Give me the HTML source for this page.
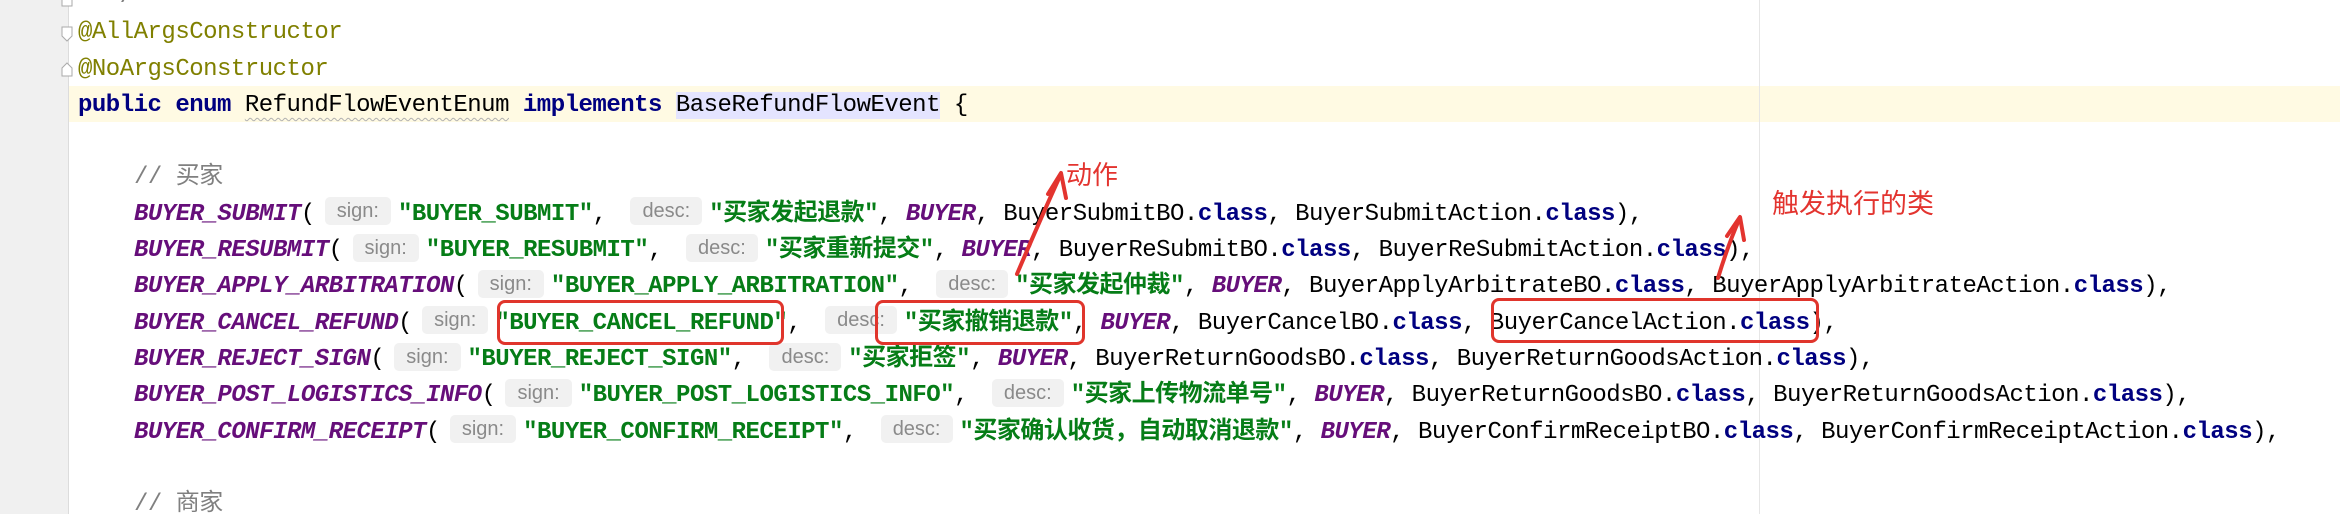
<!DOCTYPE html>
<html><head><meta charset="utf-8"><style>
html,body{margin:0;padding:0}
body{width:2340px;height:514px;overflow:hidden;background:#fff;position:relative;font-family:"Liberation Mono","Noto Sans CJK SC",monospace;font-size:24px;letter-spacing:-0.5px;color:#000}
#gut{position:absolute;left:0;top:0;width:68px;height:514px;background:#f0f0f0;border-right:1px solid #dcdcdc}
#margin{position:absolute;left:1759px;top:0;width:1px;height:514px;background:#e6e6e6}
#hl{position:absolute;left:69px;top:86px;width:2271px;height:36px;background:#fffae3}
#code{position:absolute;left:78px;top:-21px}
.l{height:36.3px;line-height:36.3px;white-space:pre}
.i{padding-left:56px}
.an{color:#808000}
.kw{color:#000080;font-weight:bold}
.en{color:#660e7a;font-weight:bold;font-style:italic}
.s{color:#067d17;font-weight:bold}
.c{color:#808080}
.h{display:inline-block;font-family:"Liberation Sans",sans-serif;font-size:20px;letter-spacing:0;color:#8a8a8a;background:#f1f1f1;border-radius:5px;height:28px;line-height:28px;padding:0 12px;vertical-align:middle;margin:0 7px 0 10px;position:relative;top:-2px}
.base{background:#e4e4ff}
.wav{text-decoration:underline wavy #b0b0b0;text-decoration-thickness:1px;text-underline-offset:6px}
.red{position:absolute;color:#e3342f;font-family:"Noto Sans CJK SC",sans-serif;letter-spacing:0}
.box{position:absolute;border:3.5px solid #e0352c;border-radius:8px;box-sizing:border-box}
</style></head><body>
<div id="gut"></div>
<div id="hl"></div>
<div id="margin"></div>
<svg style="position:absolute;left:58px;top:0" width="20" height="90">
<rect x="4" y="-6" width="10" height="12" fill="#fff" stroke="#aaa" stroke-width="1"/>
<path d="M4 27 H14 V36 L9 41 L4 36 Z" fill="#fff" stroke="#aaa"/>
<path d="M4 76 H14 V68 L9 63 L4 68 Z" fill="#fff" stroke="#aaa"/>
</svg>
<div id="code">
<div class="l c">  */</div>
<div class="l an">@AllArgsConstructor</div>
<div class="l an">@NoArgsConstructor</div>
<div class="l"><span class="kw">public enum</span> <span class="wav">RefundFlowEventEnum</span> <span class="kw">implements</span> <span class="base">BaseRefundFlowEvent</span> {</div>
<div class="l"> </div>
<div class="l i c">// 买家</div>
<div class="l i"><span class="en">BUYER_SUBMIT</span>(<span class="h">sign:</span><span class="s">"BUYER_SUBMIT"</span>, <span class="h">desc:</span><span class="s">"买家发起退款"</span>, <span class="en">BUYER</span>, BuyerSubmitBO.<span class="kw">class</span>, BuyerSubmitAction.<span class="kw">class</span>),</div>
<div class="l i"><span class="en">BUYER_RESUBMIT</span>(<span class="h">sign:</span><span class="s">"BUYER_RESUBMIT"</span>, <span class="h">desc:</span><span class="s">"买家重新提交"</span>, <span class="en">BUYER</span>, BuyerReSubmitBO.<span class="kw">class</span>, BuyerReSubmitAction.<span class="kw">class</span>),</div>
<div class="l i"><span class="en">BUYER_APPLY_ARBITRATION</span>(<span class="h">sign:</span><span class="s">"BUYER_APPLY_ARBITRATION"</span>, <span class="h">desc:</span><span class="s">"买家发起仲裁"</span>, <span class="en">BUYER</span>, BuyerApplyArbitrateBO.<span class="kw">class</span>, BuyerApplyArbitrateAction.<span class="kw">class</span>),</div>
<div class="l i"><span class="en">BUYER_CANCEL_REFUND</span>(<span class="h">sign:</span><span class="s">"BUYER_CANCEL_REFUND"</span>, <span class="h">desc:</span><span class="s">"买家撤销退款"</span>, <span class="en">BUYER</span>, BuyerCancelBO.<span class="kw">class</span>, BuyerCancelAction.<span class="kw">class</span>),</div>
<div class="l i"><span class="en">BUYER_REJECT_SIGN</span>(<span class="h">sign:</span><span class="s">"BUYER_REJECT_SIGN"</span>, <span class="h">desc:</span><span class="s">"买家拒签"</span>, <span class="en">BUYER</span>, BuyerReturnGoodsBO.<span class="kw">class</span>, BuyerReturnGoodsAction.<span class="kw">class</span>),</div>
<div class="l i"><span class="en">BUYER_POST_LOGISTICS_INFO</span>(<span class="h">sign:</span><span class="s">"BUYER_POST_LOGISTICS_INFO"</span>, <span class="h">desc:</span><span class="s">"买家上传物流单号"</span>, <span class="en">BUYER</span>, BuyerReturnGoodsBO.<span class="kw">class</span>, BuyerReturnGoodsAction.<span class="kw">class</span>),</div>
<div class="l i"><span class="en">BUYER_CONFIRM_RECEIPT</span>(<span class="h">sign:</span><span class="s">"BUYER_CONFIRM_RECEIPT"</span>, <span class="h">desc:</span><span class="s">"买家确认收货，自动取消退款"</span>, <span class="en">BUYER</span>, BuyerConfirmReceiptBO.<span class="kw">class</span>, BuyerConfirmReceiptAction.<span class="kw">class</span>),</div>
<div class="l"> </div>
<div class="l i c">// 商家</div>
</div>
<div class="box" style="left:497px;top:300px;width:287px;height:45px"></div>
<div class="box" style="left:875px;top:300px;width:210px;height:45px"></div>
<div class="box" style="left:1491px;top:298px;width:328px;height:45px"></div>
<div class="red" style="left:1066px;top:156px;font-size:26px;line-height:36px">动作</div>
<div class="red" style="left:1772px;top:184px;font-size:27px;line-height:36px">触发执行的类</div>
<svg style="position:absolute;left:0;top:0" width="2340" height="514">
<g fill="none" stroke="#e3342f" stroke-width="4" stroke-linecap="round" stroke-linejoin="round">
<path d="M1017 274 Q1040 220 1060 176"/>
<path d="M1048 194 L1061 173 L1066 198"/>
<path d="M1718 278 Q1728 245 1739 220"/>
<path d="M1727 236 L1740 217 L1744 240"/>
</g>
</svg>
</body></html>
